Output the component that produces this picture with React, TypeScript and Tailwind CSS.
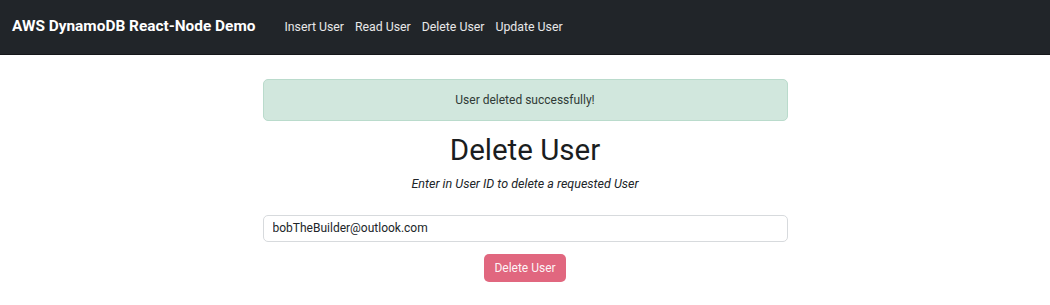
export default function App() {
  const links = ["Insert User", "Read User", "Delete User", "Update User"];
  return (
    <div className="min-h-[305px] bg-white font-['Roboto','Liberation_Sans',sans-serif] text-[#212529]">
      <nav className="h-[55px] bg-[#212529] border-b border-[#15171a] flex items-center px-3">
        <span className="text-white font-bold text-[15.4px] mr-[29px]">AWS DynamoDB React-Node Demo</span>
        <div className="flex gap-[11px]">
          {links.map((l) => (
            <a key={l} href="#" className="text-white/90 text-[12.3px]">
              {l}
            </a>
          ))}
        </div>
      </nav>

      <main className="w-[525px] mx-auto pt-[24px] flex flex-col items-center">
        <div className="w-full h-[42px] bg-[#d1e7dd] border border-[#badbcc] rounded-[5px] flex items-center justify-center text-[12px] text-[#2f3a35]">
          User deleted successfully!
        </div>
        <h1 className="mt-[9px] text-[29.5px] leading-[40px] font-normal text-[#1a1d20]">Delete User</h1>
        <p className="mt-[5px] text-[12.5px] italic text-[#212529]">Enter in User ID to delete a requested User</p>
        <input
          readOnly
          value="bobTheBuilder@outlook.com"
          className="mt-[21px] w-full h-[27px] px-[9px] text-[12px] text-[#212529] border border-[#d7dadd] rounded-[5px] outline-none"
        />
        <button className="mt-[12px] h-[28px] w-[82px] rounded-[5px] bg-[#e1677f] text-white/95 text-[12px]">
          Delete User
        </button>
      </main>
    </div>
  );
}
